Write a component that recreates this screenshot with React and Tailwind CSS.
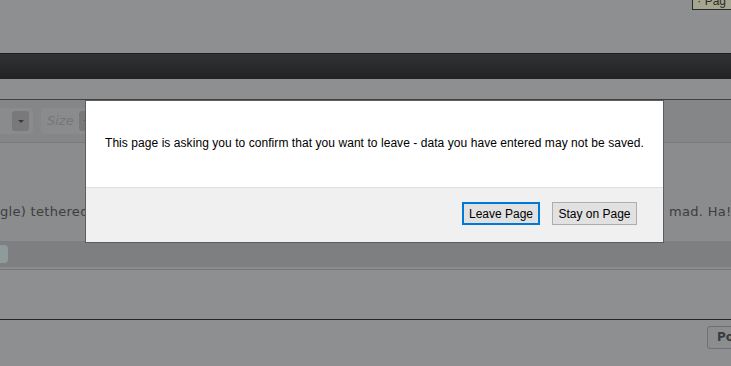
import React from 'react';

const ArrowBox = () => (
  <div className="w-[17px] h-[20px] rounded-[3px] bg-[#79797b] flex items-center justify-center">
    <div className="w-0 h-0 border-l-[3px] border-r-[3px] border-t-[3px] border-l-transparent border-r-transparent border-t-[#3a3a3a]" />
  </div>
);

export default function App() {
  return (
    <div className="relative w-[731px] h-[366px] overflow-hidden bg-[#8e8f90] font-['DejaVu_Sans',sans-serif]">
      {/* Page behind the dimmed overlay */}
      <div className="flex flex-col">
        <div className="h-[53px] flex justify-end">
          <div className="mt-[-9px] h-[19px] ml-auto mr-[-20px] pl-[4px] pr-[24px] border border-[#2a2a2a] bg-[#a6a690] text-[12px] leading-[18px] text-[#2a2a2a] font-['Liberation_Sans',sans-serif]">
            · Pag
          </div>
        </div>
        <div className="h-[26px] border-t border-[#1e1f20] bg-gradient-to-b from-[#313234] to-[#222325]" />
        <div className="h-[20px]" />
        <div className="h-[1px] bg-[#3f4041]" />
        <div className="h-[43px] bg-[#858687] border-b border-[#7a7b7c] flex items-center gap-[8px]">
          <div className="h-[26px] w-[33px] rounded-r-[4px] bg-[#8a8b8c] flex items-center justify-end pr-[4px]">
            <ArrowBox />
          </div>
          <div className="h-[26px] w-[60px] rounded-[4px] bg-[#8a8b8c] flex items-center pl-[6px] gap-[5px]">
            <span className="italic text-[13px] text-[#767778]">Size</span>
            <ArrowBox />
          </div>
        </div>
        <div className="h-[98px] bg-[#8b8c8d] flex items-end justify-between pb-[20px] text-[13px] text-[#3c3d3e]">
          <span className="tracking-[0.3px]">gle) tethered to the</span>
          <span className="mr-[-6px] tracking-[0.3px] whitespace-nowrap">mad. Ha!!</span>
        </div>
        <div className="h-[26px] bg-[#7e7f80] flex items-center">
          <div className="w-[8px] h-[18px] rounded-r-[4px] bg-[#8f9a9a]" />
        </div>
        <div className="h-[2px] bg-[#8a8b8c]" />
        <div className="h-[1px] bg-[#767778]" />
        <div className="h-[49px]" />
        <div className="h-[1px] bg-[#252627]" />
        <div className="h-[45px] flex justify-end pt-[6px]">
          <div className="h-[23px] w-[34px] mr-[-10px] rounded-[3px] border border-[#6f7071] bg-[#8c8d8e] pl-[9px] text-[12px] leading-[21px] font-bold text-[#3a3b3c]">
            Po
          </div>
        </div>
      </div>

      {/* Leave page dialog */}
      <div className="absolute left-[85px] top-[100px] w-[579px] h-[143px] border border-[#5d5e5f] bg-white flex flex-col font-['Liberation_Sans',Arial,sans-serif] text-[12px] text-black">
        <div className="h-[86px] pl-[19px] pt-[35px] leading-[15px] tracking-[0.06px] whitespace-nowrap">
          This page is asking you to confirm that you want to leave - data you have entered may not be saved.
        </div>
        <div className="flex-1 bg-[#f0f0f0] border-t border-[#dfdfdf] flex justify-end items-start pt-[14px] pr-[26px] gap-[12px]">
          <button className="h-[23px] w-[78px] border-2 border-[#0078d7] bg-[#e1e1e1] leading-[18px]">
            Leave Page
          </button>
          <button className="h-[23px] w-[85px] border border-[#adadad] bg-[#e1e1e1] leading-[20px]">
            Stay on Page
          </button>
        </div>
      </div>
    </div>
  );
}
